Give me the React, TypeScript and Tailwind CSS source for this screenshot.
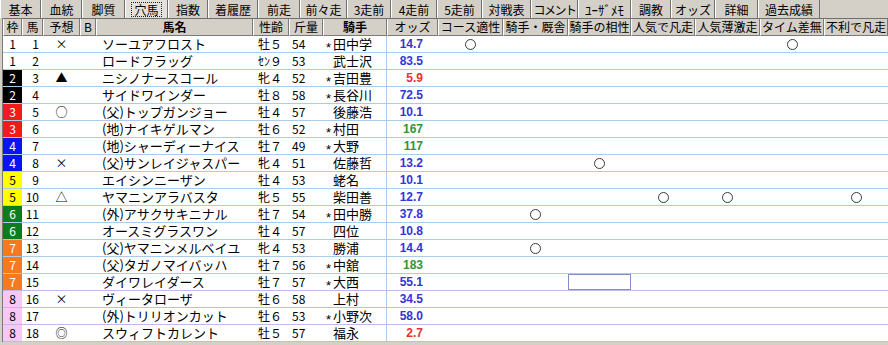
const GRID =
  "grid grid-cols-[19px_21px_37px_16px_157px_36px_34px_64px_51px_65px_65px_63px_64px_65px_64px_64px]"

const tabs = [
  { label: "基本", w: "w-[41px]" },
  { label: "血統", w: "w-[41px]" },
  { label: "脚質", w: "w-[43px]" },
  { label: "穴馬", w: "w-[43px]", active: true },
  { label: "指数", w: "w-[40px]" },
  { label: "着履歴", w: "w-[50px]" },
  { label: "前走", w: "w-[42px]" },
  { label: "前々走", w: "w-[47px]" },
  { label: "3走前", w: "w-[44px]" },
  { label: "4走前", w: "w-[46px]" },
  { label: "5走前", w: "w-[45px]" },
  { label: "対戦表", w: "w-[49px]" },
  { label: "コメント", w: "w-[47px]", tight: "tracking-[-1.5px]" },
  { label: "ﾕｰｻﾞﾒﾓ", w: "w-[53px]", tight: "text-[13px]" },
  { label: "調教", w: "w-[40px]" },
  { label: "オッズ", w: "w-[44px]" },
  { label: "詳細", w: "w-[43px]" },
  { label: "過去成績", w: "w-[62px]" },
]

const headers = [
  "枠", "馬", "予想", "B", "馬名", "性齢", "斤量", "騎手", "オッズ",
  "コース適性", "騎手・厩舎", "騎手の相性", "人気で凡走", "人気薄激走", "タイム差無", "不利で凡走",
]

const frameColors: Record<number, string> = {
  1: "bg-white text-black",
  2: "bg-black text-white",
  3: "bg-[#f01c1c] text-white",
  4: "bg-[#0a14f0] text-white",
  5: "bg-[#ffff00] text-black",
  6: "bg-[#0a7d1e] text-white",
  7: "bg-[#f57a1e] text-white",
  8: "bg-[#f8c8f4] text-black",
}

type Horse = {
  waku: number
  num: number
  mark?: string
  name: string
  sexAge: string
  kg: string
  star?: boolean
  jockey: string
  odds: string
  circles?: number[]
  selected?: number
}

const horses: Horse[] = [
  { waku: 1, num: 1, mark: "×", name: "ソーユアフロスト", sexAge: "牡５", kg: "54", star: true, jockey: "田中学", odds: "14.7", circles: [0, 5] },
  { waku: 1, num: 2, name: "ロードフラッグ", sexAge: "ｾﾝ９", kg: "53", jockey: "武士沢", odds: "83.5" },
  { waku: 2, num: 3, mark: "▲", name: "ニシノナースコール", sexAge: "牝４", kg: "52", star: true, jockey: "吉田豊", odds: "5.9" },
  { waku: 2, num: 4, name: "サイドワインダー", sexAge: "牡８", kg: "58", star: true, jockey: "長谷川", odds: "72.5" },
  { waku: 3, num: 5, mark: "○", name: "(父)トップガンジョー", sexAge: "牡４", kg: "57", jockey: "後藤浩", odds: "10.1" },
  { waku: 3, num: 6, name: "(地)ナイキゲルマン", sexAge: "牡６", kg: "52", star: true, jockey: "村田", odds: "167" },
  { waku: 4, num: 7, name: "(地)シャーディーナイス", sexAge: "牡７", kg: "49", star: true, jockey: "大野", odds: "117" },
  { waku: 4, num: 8, mark: "×", name: "(父)サンレイジャスパー", sexAge: "牝４", kg: "51", jockey: "佐藤哲", odds: "13.2", circles: [2] },
  { waku: 5, num: 9, name: "エイシンニーザン", sexAge: "牡４", kg: "53", jockey: "蛯名", odds: "10.1" },
  { waku: 5, num: 10, mark: "△", name: "ヤマニンアラバスタ", sexAge: "牝５", kg: "55", jockey: "柴田善", odds: "12.7", circles: [3, 4, 6] },
  { waku: 6, num: 11, name: "(外)アサクサキニナル", sexAge: "牡７", kg: "54", star: true, jockey: "田中勝", odds: "37.8", circles: [1] },
  { waku: 6, num: 12, name: "オースミグラスワン", sexAge: "牡４", kg: "57", jockey: "四位", odds: "10.8" },
  { waku: 7, num: 13, name: "(父)ヤマニンメルベイユ", sexAge: "牝４", kg: "53", jockey: "勝浦", odds: "14.4", circles: [1] },
  { waku: 7, num: 14, name: "(父)タガノマイバッハ", sexAge: "牡７", kg: "56", star: true, jockey: "中舘", odds: "183" },
  { waku: 7, num: 15, name: "ダイワレイダース", sexAge: "牡７", kg: "57", star: true, jockey: "大西", odds: "55.1", selected: 2 },
  { waku: 8, num: 16, mark: "×", name: "ヴィータローザ", sexAge: "牡６", kg: "58", jockey: "上村", odds: "34.5" },
  { waku: 8, num: 17, name: "(外)トリリオンカット", sexAge: "牡６", kg: "53", star: true, jockey: "小野次", odds: "58.0" },
  { waku: 8, num: 18, mark: "◎", name: "スウィフトカレント", sexAge: "牡５", kg: "57", jockey: "福永", odds: "2.7" },
]

function oddsColor(odds: string) {
  const v = parseFloat(odds)
  if (v < 10) return "text-[#e63232]"
  if (v >= 100) return "text-[#2f963a]"
  return "text-[#3434d6]"
}

function TabBar() {
  return (
    <div className="flex h-[18px]">
      {tabs.map((t) => (
        <div
          key={t.label}
          className={`${t.w} h-full flex items-center justify-center whitespace-nowrap border-l border-l-white border-r border-r-[#6f6f6f] ${
            t.active ? "bg-[#e4e1da]" : ""
          }`}
        >
          {t.active ? (
            <span className="px-[2px] leading-[13px] border border-dotted border-[#222]">{t.label}</span>
          ) : (
            <span className={`leading-[13px] ${t.tight ?? ""}`}>{t.label}</span>
          )}
        </div>
      ))}
      <div className="flex-1" />
    </div>
  )
}

function HeaderRow() {
  return (
    <div className={`${GRID} h-[18px] leading-[16px] border-t border-[#6f6f6f]`}>
      {headers.map((h) => (
        <div
          key={h}
          className={`flex items-center justify-center whitespace-nowrap overflow-hidden border-l border-l-white border-r border-r-[#7a7a7a] border-b border-b-[#7a7a7a] ${
            h === "馬名" || h === "騎手" ? "font-bold" : ""
          }`}
        >
          {h}
        </div>
      ))}
    </div>
  )
}

function Circle() {
  return <span className="w-[11px] h-[11px] rounded-full border border-[#3a3a3a]" />
}

function HorseRow({ h, next }: { h: Horse; next?: Horse }) {
  const lavender = h.waku === 8 || next?.waku === 8
  return (
    <div
      className={`${GRID} h-[17px] leading-[16px] bg-white border-b ${lavender ? "border-[#c4b8ea]" : "border-[#a9cbec]"}`}
    >
      <div className={`flex items-center justify-center ${frameColors[h.waku]}`}>{h.waku}</div>
      <div className="flex items-center justify-end pr-[4px]">{h.num}</div>
      <div className="flex items-center justify-center">{h.mark}</div>
      <div />
      <div className="flex items-center pl-[6px] text-[13px] whitespace-nowrap">{h.name}</div>
      <div className="flex items-center pl-[5px]">{h.sexAge}</div>
      <div className="flex items-center pl-[3px]">{h.kg}</div>
      <div className="flex items-center pl-[3px] border-r border-[#a9cbec]">
        <span className="w-[7px] relative top-[3px] font-['Liberation_Sans',sans-serif] text-[13px] leading-none">
          {h.star ? "*" : ""}
        </span>
        <span className="text-[13px]">{h.jockey}</span>
      </div>
      <div
        className={`flex items-center justify-end pr-[15px] font-['Liberation_Sans',sans-serif] font-bold ${oddsColor(h.odds)}`}
      >
        {h.odds}
      </div>
      {[0, 1, 2, 3, 4, 5, 6].map((i) => (
        <div
          key={i}
          className={`flex items-center justify-center ${h.selected === i ? "border border-[#8a8ad0]" : ""}`}
        >
          {h.circles?.includes(i) && <Circle />}
        </div>
      ))}
    </div>
  )
}

export default function App() {
  return (
    <div className="w-[888px] h-[345px] overflow-hidden bg-[#d4d0c8] text-[12px] text-black font-['Noto_Sans_CJK_JP',sans-serif]">
      <TabBar />
      <div className="flex">
        <div className="w-[3px] border-r border-[#7a7a7a]" />
        <div className="flex-1">
          <HeaderRow />
          {horses.map((h, i) => (
            <HorseRow key={h.num} h={h} next={horses[i + 1]} />
          ))}
        </div>
      </div>
    </div>
  )
}
